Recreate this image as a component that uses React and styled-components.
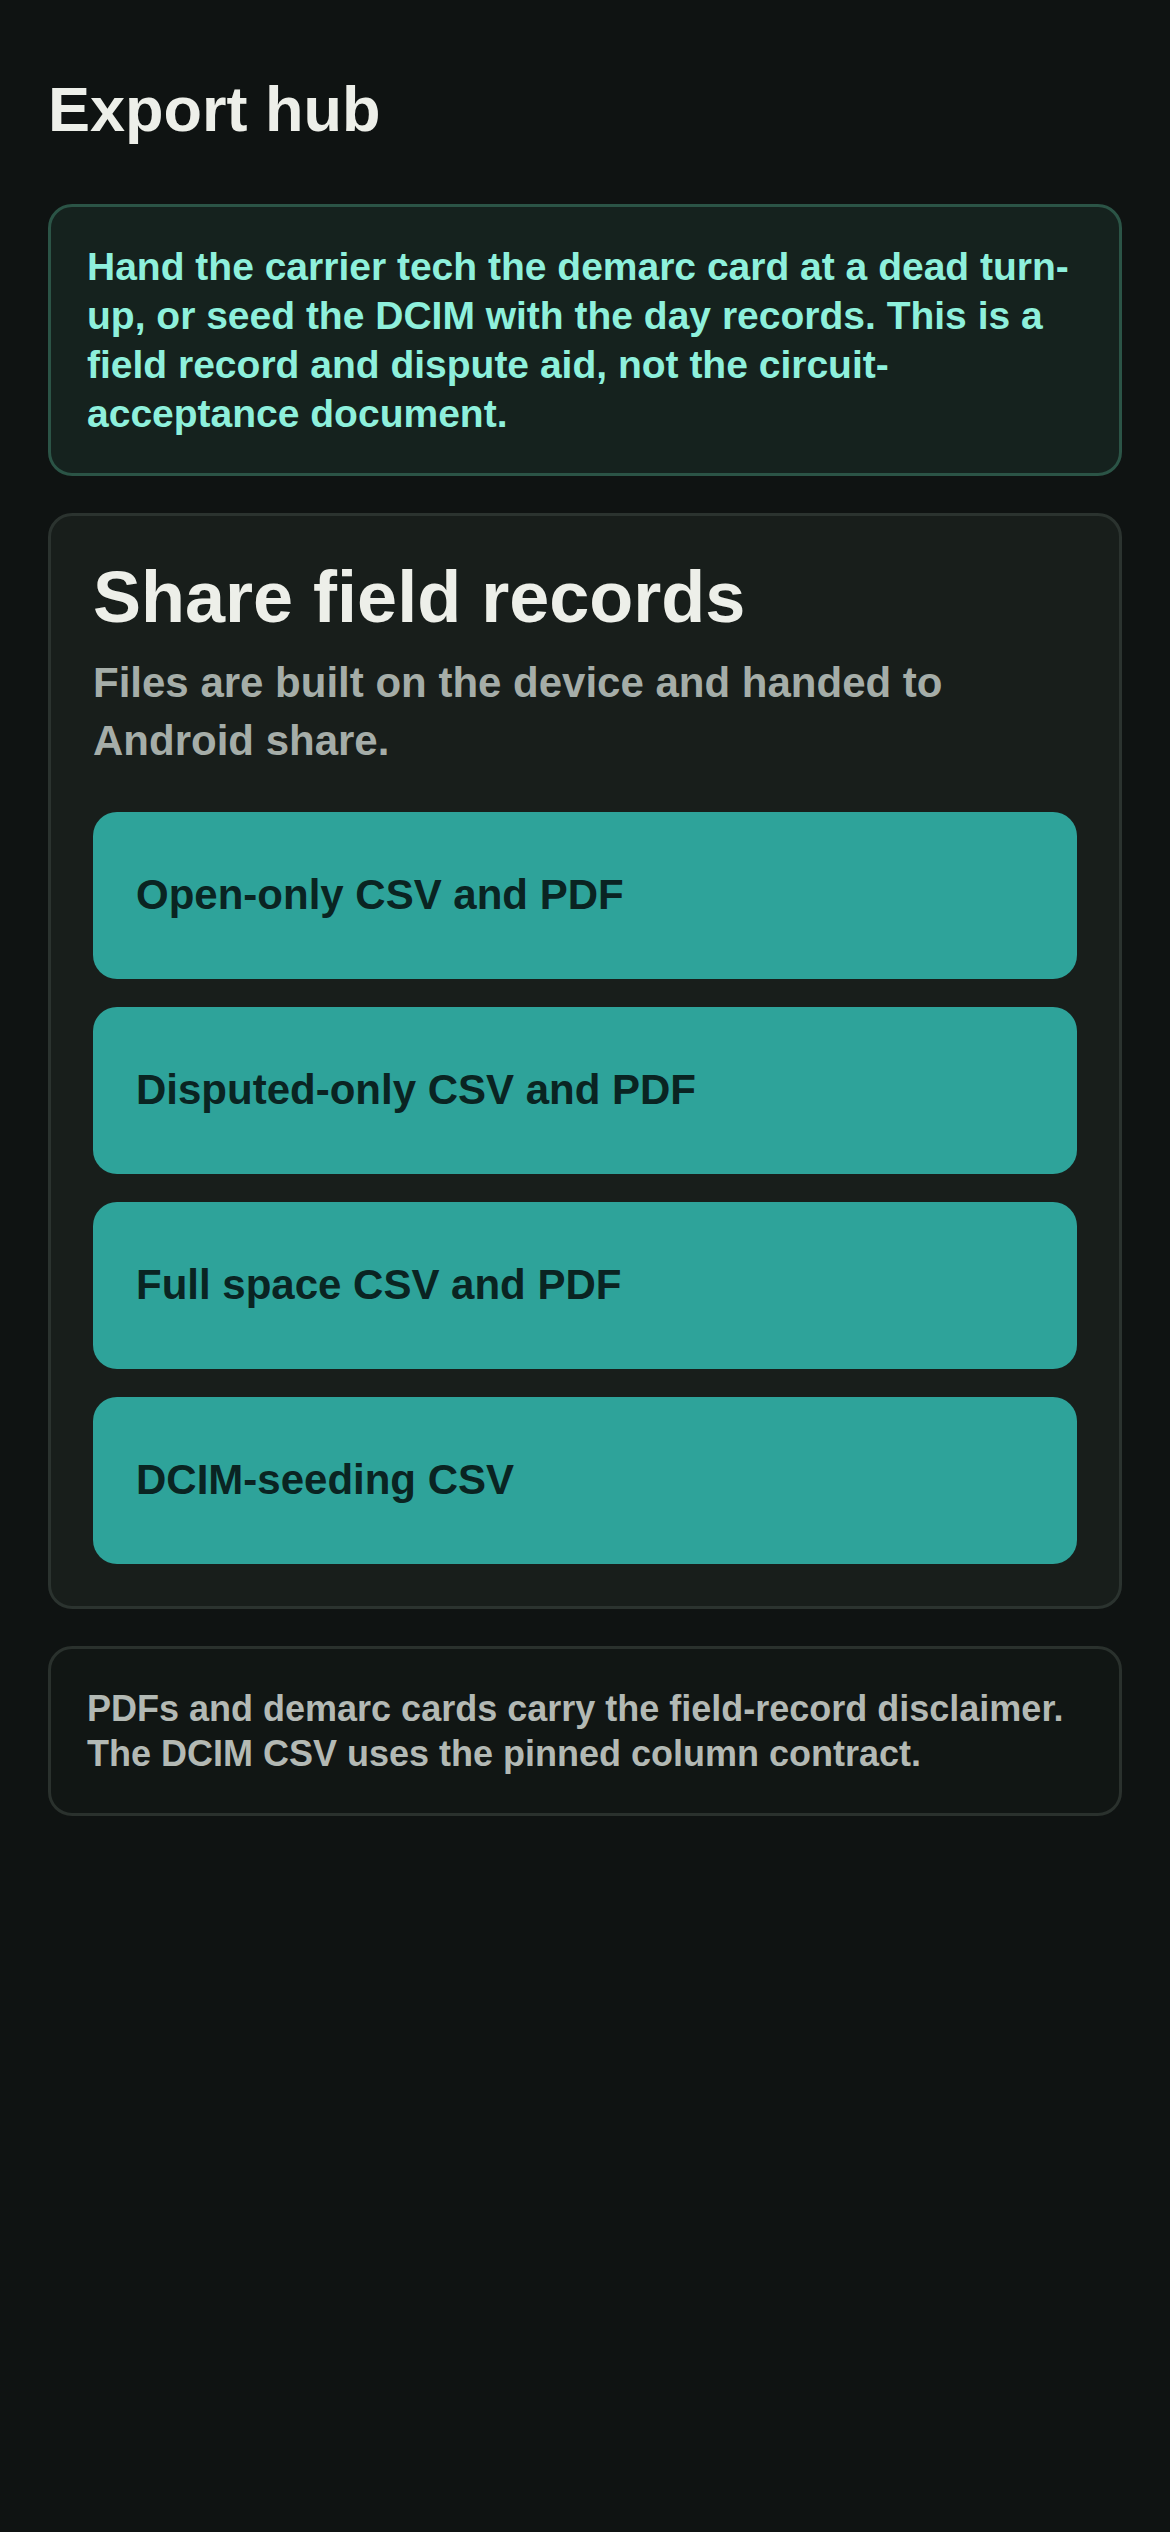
import React from "react";
import styled, { createGlobalStyle } from "styled-components";

const GlobalStyle = createGlobalStyle`
  html, body {
    margin: 0;
    padding: 0;
    background: #0f1312;
  }
  body {
    font-family: "Liberation Sans", Arial, sans-serif;
  }
`;

const Page = styled.main`
  min-height: 2532px;
  box-sizing: border-box;
  padding: 72px 48px 48px;
  background: #0f1312;
  display: flex;
  flex-direction: column;
  gap: 37px;
`;

const PageTitle = styled.h1`
  margin: 0 0 19px;
  font-size: 63px;
  line-height: 1.2;
  font-weight: 700;
  color: #edefe9;
`;

const Card = styled.section`
  box-sizing: border-box;
  border-radius: 24px;
  border: 3px solid ${(p) => p.$border};
  background: ${(p) => p.$bg};
  padding: ${(p) => p.$pad};
`;

const Note = styled.p`
  margin: 0;
  font-size: ${(p) => p.$size}px;
  line-height: ${(p) => p.$lh}px;
  font-weight: 700;
  color: ${(p) => p.$color};
`;

const CardTitle = styled.h2`
  margin: 0;
  font-size: 72px;
  line-height: 1.1;
  font-weight: 700;
  color: #edefe9;
`;

const CardLead = styled.p`
  margin: 17px 0 42px;
  font-size: 42px;
  line-height: 58px;
  font-weight: 700;
  color: #a5ada8;
`;

const ActionList = styled.div`
  display: flex;
  flex-direction: column;
  gap: 28px;
`;

const ActionButton = styled.button`
  display: flex;
  align-items: center;
  width: 100%;
  height: 167px;
  padding: 0 43px;
  border: none;
  border-radius: 24px;
  background: #2ea39a;
  color: #0a2422;
  font-family: "Liberation Sans", Arial, sans-serif;
  font-size: 42px;
  font-weight: 700;
  text-align: left;
  cursor: pointer;
`;

const actions = [
  "Open-only CSV and PDF",
  "Disputed-only CSV and PDF",
  "Full space CSV and PDF",
  "DCIM-seeding CSV",
];

export default function App() {
  return (
    <>
      <GlobalStyle />
      <Page>
        <PageTitle>Export hub</PageTitle>

        <Card $bg="#15221e" $border="#2b5446" $pad="35px 36px">
          <Note $size={39} $lh={49} $color="#8ef0dc">
            Hand the carrier tech the demarc card at a dead turn-up, or seed the
            DCIM with the day records. This is a field record and dispute aid,
            not the circuit-acceptance document.
          </Note>
        </Card>

        <Card $bg="#181e1b" $border="#2b332f" $pad="42px">
          <CardTitle>Share field records</CardTitle>
          <CardLead>
            Files are built on the device and handed to Android share.
          </CardLead>
          <ActionList>
            {actions.map((label) => (
              <ActionButton key={label}>{label}</ActionButton>
            ))}
          </ActionList>
        </Card>

        <Card $bg="#111614" $border="#2a312d" $pad="37px 36px">
          <Note $size={36} $lh={45} $color="#b3b9b4">
            PDFs and demarc cards carry the field-record disclaimer. The DCIM
            CSV uses the pinned column contract.
          </Note>
        </Card>
      </Page>
    </>
  );
}
